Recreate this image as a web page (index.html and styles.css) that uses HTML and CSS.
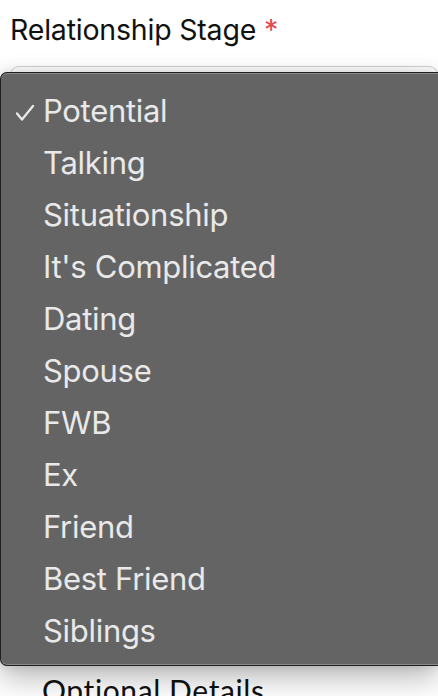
FILE: index.html
```html
<!DOCTYPE html>
<html>
<head>
<meta charset="utf-8">
<link rel="stylesheet" href="styles.css">
</head>
<body>
<div class="form">
  <div class="field">
    <label class="label">Relationship Stage <span class="req">*</span></label>
    <div class="select"></div>
  </div>
  <div class="section">Optional Details</div>
</div>
<ul class="menu">
  <li class="item checked"><svg class="check" width="20" height="18" viewBox="0 0 20 18"><polyline points="2,9.5 7,15.5 18,2" fill="none" stroke="#e9e9e9" stroke-width="2.3" stroke-linecap="round" stroke-linejoin="round"/></svg>Potential</li>
  <li class="item">Talking</li>
  <li class="item">Situationship</li>
  <li class="item">It's Complicated</li>
  <li class="item">Dating</li>
  <li class="item">Spouse</li>
  <li class="item">FWB</li>
  <li class="item">Ex</li>
  <li class="item">Friend</li>
  <li class="item">Best Friend</li>
  <li class="item">Siblings</li>
</ul>
</body>
</html>
```
FILE: styles.css
```css
html, body {
  margin: 0;
  padding: 0;
  background: #ffffff;
  overflow: hidden;
  height: 696px;
}
.form {
  padding: 13px 0 0 10px;
  font-family: Inter, "Liberation Sans", sans-serif;
}
.label {
  display: block;
  font-size: 28.5px;
  line-height: 34px;
  color: #111;
  letter-spacing: -0.2px;
}
.req {
  color: #e5484d;
}
.select {
  margin-top: 19px;
  height: 48px;
  border: 1px solid #cfd3d8;
  border-radius: 9px;
  background: #fff;
}
.section {
  margin-top: 556px;
  padding-left: 32px;
  font-family: Lato, sans-serif;
  font-size: 30px;
  letter-spacing: 0.6px;
  color: #111;
}
.menu {
  position: absolute;
  top: 72px;
  left: 0;
  right: 0;
  height: 594px;
  margin: 0;
  padding: 12px 0 0 0;
  box-sizing: border-box;
  list-style: none;
  background: #646464;
  border: 1px solid #1e1e1e;
  border-right: none;
  border-radius: 7px 0 0 7px;
  box-shadow: inset 0 1px 0 #8a8a8a, inset 0 -1px 0 #8a8a8a, 0 12px 30px rgba(0,0,0,0.28), 0 0 12px rgba(0,0,0,0.12);
  font-family: Inter, "Liberation Sans", sans-serif;
}
.item {
  position: relative;
  height: 52px;
  line-height: 52px;
  padding-left: 42px;
  font-size: 31px;
  color: #e9e9e9;
  letter-spacing: -0.3px;
}
.check {
  position: absolute;
  left: 14px;
  top: 19px;
}
```
